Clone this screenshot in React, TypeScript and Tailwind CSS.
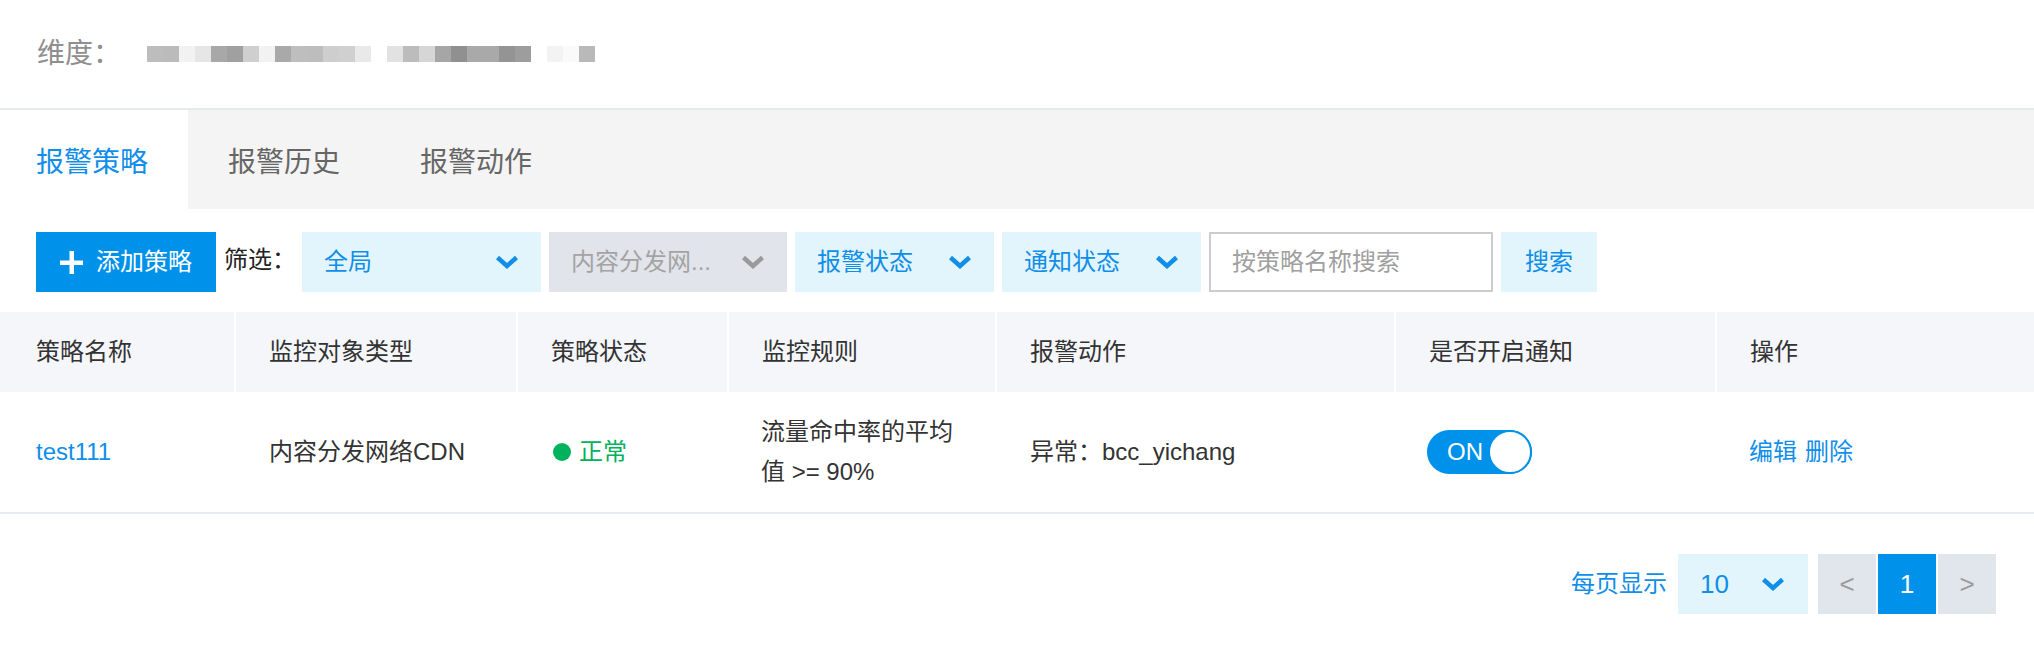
import React from "react";

const FONT = "font-['Liberation_Sans','Noto_Sans_CJK_SC',sans-serif]";

const blurBlocks: string[] = [
  "bg-[#bdbdbd]", "bg-[#bbbbbb]", "bg-[#f2f2f2]", "bg-[#e6e6e6]", "bg-[#a8a8a8]", "bg-[#a0a0a0]", "bg-[#cfcfcf]",
  "bg-[#f2f2f2]", "bg-[#a9a9a9]", "bg-[#bebebe]", "bg-[#bdbdbd]", "bg-[#cecece]", "bg-[#d0d0d0]", "bg-[#e9e9e9]",
  "bg-white",
  "bg-[#e2e2e2]", "bg-[#bcbcbc]", "bg-[#d6d6d6]", "bg-[#a6a6a6]", "bg-[#909090]", "bg-[#a9a9a9]", "bg-[#a9a9a9]",
  "bg-[#949494]", "bg-[#9d9d9d]",
  "bg-white",
  "bg-[#f3f3f3]", "bg-[#fafafa]", "bg-[#b9b9b9]",
];

function Chevron({ color }: { color: string }) {
  return (
    <svg width="24" height="14" viewBox="0 0 24 14" fill="none">
      <path d="M2.5 2.5 L12 11 L21.5 2.5" stroke={color} strokeWidth="4.5" strokeLinejoin="miter" />
    </svg>
  );
}

function Plus() {
  return (
    <svg width="23" height="23" viewBox="0 0 23 23">
      <rect x="9.5" y="0" width="4.5" height="23" fill="#ffffff" />
      <rect x="0" y="9.5" width="23" height="4.5" fill="#ffffff" />
    </svg>
  );
}

function Select({ label, width, disabled }: { label: string; width: string; disabled?: boolean }) {
  return (
    <div
      className={`${width} h-[60px] flex items-center justify-between pl-[22px] pr-[22px] ${
        disabled ? "bg-[#e1e4ea] text-[#a3a3a3]" : "bg-[#e3f5fc] text-[#108ee9]"
      }`}
    >
      <span className="text-[24px] leading-[30px] whitespace-nowrap">{label}</span>
      <Chevron color={disabled ? "#9a9a9a" : "#108ee9"} />
    </div>
  );
}

const headers = ["策略名称", "监控对象类型", "策略状态", "监控规则", "报警动作", "是否开启通知", "操作"];

export default function App() {
  return (
    <div className={`w-full min-h-screen bg-white ${FONT}`}>
      {/* Header */}
      <div className="h-[108px] flex items-center pl-[37px]">
        <span className="text-[28px] leading-[36px] text-[#8f8f8f] w-[110px]">维度：</span>
        <div className="flex h-[16px] blur-[0.6px]">
          {blurBlocks.map((c, i) => (
            <div key={i} className={`w-[16px] h-[16px] ${c}`} />
          ))}
        </div>
      </div>
      <div className="h-[2px] bg-[#e6eaee]" />

      {/* Tabs */}
      <div className="h-[99px] bg-[#f4f4f4] flex">
        <div className="pl-[36px] pr-[40px] flex items-center bg-white text-[28px] text-[#108ee9] pt-[6px]">报警策略</div>
        <div className="px-[40px] flex items-center text-[28px] text-[#666666] pt-[6px]">报警历史</div>
        <div className="px-[40px] flex items-center text-[28px] text-[#666666] pt-[6px]">报警动作</div>
      </div>

      {/* Toolbar */}
      <div className="pt-[23px] pl-[36px] flex items-center gap-[8px]">
        <button className="w-[180px] h-[60px] bg-[#0091ea] flex items-center pl-[24px] gap-[13px] text-white">
          <Plus />
          <span className="text-[24px] leading-[30px]">添加策略</span>
        </button>
        <span className="w-[70px] text-[24px] leading-[30px] text-[#222222] whitespace-nowrap -mt-[4px]">筛选：</span>
        <Select label="全局" width="w-[239px]" />
        <Select label="内容分发网..." width="w-[238px]" disabled />
        <Select label="报警状态" width="w-[199px]" />
        <Select label="通知状态" width="w-[199px]" />
        <div className="w-[284px] h-[60px] border-2 border-[#cccccc] flex items-center pl-[21px]">
          <span className="text-[24px] leading-[30px] text-[#a0a0a0]">按策略名称搜索</span>
        </div>
        <div className="w-[96px] h-[60px] bg-[#e3f5fc] flex items-center justify-center text-[24px] text-[#108ee9]">
          搜索
        </div>
      </div>

      {/* Table */}
      <div className="mt-[20px]">
        <div className="grid grid-cols-[236px_282px_211px_268px_399px_321px_1fr] h-[80px] bg-[#f5f6fa]">
          {headers.map((h, i) => (
            <div
              key={h}
              className={`flex items-center text-[24px] text-[#333333] ${i === 0 ? "pl-[36px]" : "pl-[33px]"} ${
                i < headers.length - 1 ? "border-r-2 border-white" : ""
              }`}
            >
              {h}
            </div>
          ))}
        </div>
        <div className="grid grid-cols-[236px_282px_211px_268px_399px_321px_1fr] h-[122px] border-b-2 border-[#e8ecf4] text-[24px] text-[#333333]">
          <div className="flex items-center pl-[36px] text-[#108ee9]">test111</div>
          <div className="flex items-center pl-[33px]">内容分发网络CDN</div>
          <div className="flex items-center pl-[35px] text-[#00b25c]">
            <span className="w-[18px] h-[18px] rounded-full bg-[#00b25c] mr-[8px]" />
            正常
          </div>
          <div className="flex items-center pl-[32px] pr-[34px] leading-[40px]">流量命中率的平均值 &gt;= 90%</div>
          <div className="flex items-center pl-[33px]">异常：bcc_yichang</div>
          <div className="flex items-center pl-[31px]">
            <div className="w-[105px] h-[44px] rounded-full bg-[#0091ea] flex items-center justify-between">
              <span className="pl-[20px] text-white text-[24px] leading-[30px]">ON</span>
              <span className="w-[44px] h-[44px] rounded-full bg-white border-2 border-[#0091ea]" />
            </div>
          </div>
          <div className="flex items-center pl-[32px] text-[#108ee9] gap-[8px]">
            <span>编辑</span>
            <span>删除</span>
          </div>
        </div>
      </div>

      {/* Pagination */}
      <div className="mt-[40px] flex justify-end items-center pr-[38px]">
        <span className="text-[24px] leading-[30px] text-[#108ee9] mr-[11px]">每页显示</span>
        <div className="w-[130px] h-[60px] bg-[#e3f5fc] flex items-center justify-between pl-[22px] pr-[23px] text-[#108ee9]">
          <span className="text-[26px] leading-[30px]">10</span>
          <Chevron color="#108ee9" />
        </div>
        <div className="ml-[10px] flex gap-[2px]">
          <div className="w-[58px] h-[60px] bg-[#e1e5ec] flex items-center justify-center text-[26px] text-[#9a9a9a]">&lt;</div>
          <div className="w-[58px] h-[60px] bg-[#0091ea] flex items-center justify-center text-[26px] text-white">1</div>
          <div className="w-[58px] h-[60px] bg-[#e1e5ec] flex items-center justify-center text-[26px] text-[#9a9a9a]">&gt;</div>
        </div>
      </div>
    </div>
  );
}
